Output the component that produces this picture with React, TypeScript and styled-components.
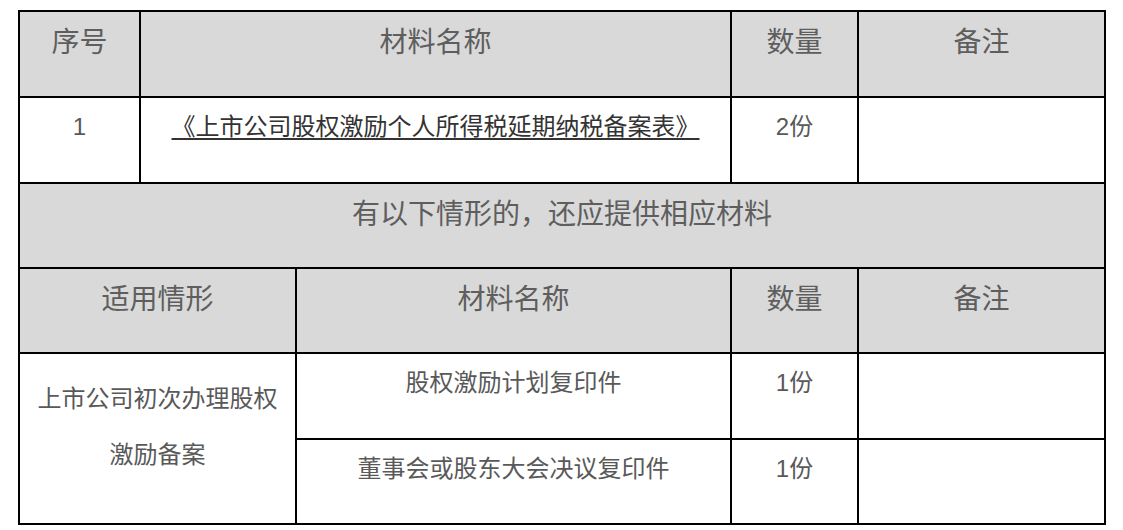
import React from "react"
import styled, { createGlobalStyle } from "styled-components"

const GlobalStyle = createGlobalStyle`
  html, body {
    margin: 0;
    padding: 0;
    background: #fff;
  }
  body {
    font-family: "Liberation Sans", "Noto Sans CJK SC", sans-serif;
  }
`

const Page = styled.div`
  padding: 10px 0 0 18px;
`

const Table = styled.table`
  width: 1088px;
  border-collapse: collapse;
  table-layout: fixed;
  border: 2px solid #000;
`

const Row = styled.tr<{ $h?: number }>`
  height: ${(p) => p.$h || 86}px;
`

const HeadCell = styled.td`
  border: 2px solid #000;
  background: #d9d9d9;
  color: #5e5e5e;
  font-size: 28px;
  line-height: 40px;
  text-align: center;
  vertical-align: top;
  padding: 11px 6px 0;
`

const Cell = styled.td<{ $tall?: boolean }>`
  border: 2px solid #000;
  background: #fff;
  color: #595959;
  font-size: 24px;
  line-height: ${(p) => (p.$tall ? 56 : 36)}px;
  text-align: center;
  vertical-align: top;
  padding: ${(p) => (p.$tall ? 17 : 11)}px 6px 0;
`

const DocLink = styled.span`
  color: #333;
  text-decoration: underline;
  text-decoration-thickness: 2px;
  text-underline-offset: 3px;
`

const colWidths = [121, 156, 435, 127, 247]

const App = () => {
  return (
    <Page>
      <GlobalStyle />
      <Table>
        <colgroup>
          {colWidths.map((w, i) => (
            <col key={i} style={{ width: w }} />
          ))}
        </colgroup>
        <tbody>
          <Row $h={86}>
            <HeadCell>序号</HeadCell>
            <HeadCell colSpan={2}>材料名称</HeadCell>
            <HeadCell>数量</HeadCell>
            <HeadCell>备注</HeadCell>
          </Row>
          <Row $h={86}>
            <Cell>1</Cell>
            <Cell colSpan={2}>
              <DocLink>《上市公司股权激励个人所得税延期纳税备案表》</DocLink>
            </Cell>
            <Cell>2份</Cell>
            <Cell></Cell>
          </Row>
          <Row $h={85}>
            <HeadCell colSpan={5}>有以下情形的，还应提供相应材料</HeadCell>
          </Row>
          <Row $h={85}>
            <HeadCell colSpan={2}>适用情形</HeadCell>
            <HeadCell>材料名称</HeadCell>
            <HeadCell>数量</HeadCell>
            <HeadCell>备注</HeadCell>
          </Row>
          <Row $h={86}>
            <Cell colSpan={2} rowSpan={2} $tall>
              上市公司初次办理股权
              <br />
              激励备案
            </Cell>
            <Cell>股权激励计划复印件</Cell>
            <Cell>1份</Cell>
            <Cell></Cell>
          </Row>
          <Row $h={85}>
            <Cell>董事会或股东大会决议复印件</Cell>
            <Cell>1份</Cell>
            <Cell></Cell>
          </Row>
        </tbody>
      </Table>
    </Page>
  )
}

export default App
